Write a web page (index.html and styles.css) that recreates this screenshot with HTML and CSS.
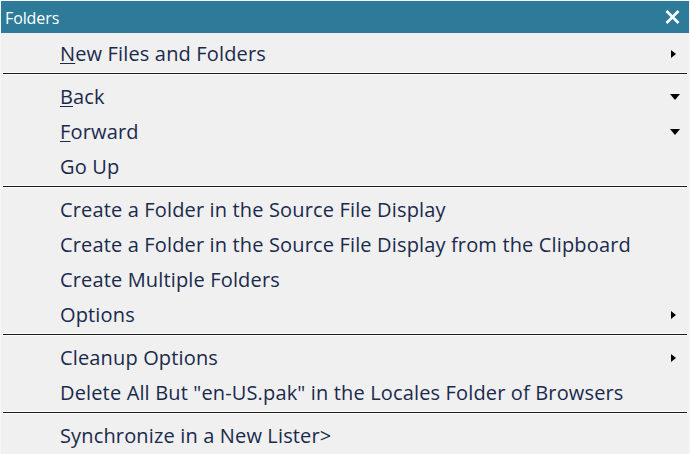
FILE: index.html
```html
<!DOCTYPE html>
<html>
<head>
<meta charset="utf-8">
<link rel="stylesheet" href="styles.css">
</head>
<body>
<div class="menu">
  <div class="title">
    <span class="title-text">Folders</span>
    <svg class="close" width="15" height="14" viewBox="0 0 15 14"><path d="M1.5 1 L13.5 13 M13.5 1 L1.5 13" stroke="#fff" stroke-width="2.6" fill="none"/></svg>
  </div>
  <div class="items">
    <div class="item"><span class="label"><u>N</u>ew Files and Folders</span><span class="arrow-right"></span></div>
    <div class="sep"></div>
    <div class="item"><span class="label"><u>B</u>ack</span><span class="arrow-down"></span></div>
    <div class="item"><span class="label"><u>F</u>orward</span><span class="arrow-down"></span></div>
    <div class="item"><span class="label">Go Up</span></div>
    <div class="sep"></div>
    <div class="item"><span class="label">Create a Folder in the Source File Display</span></div>
    <div class="item"><span class="label">Create a Folder in the Source File Display from the Clipboard</span></div>
    <div class="item"><span class="label">Create Multiple Folders</span></div>
    <div class="item"><span class="label">Options</span><span class="arrow-right"></span></div>
    <div class="sep"></div>
    <div class="item"><span class="label">Cleanup Options</span><span class="arrow-right"></span></div>
    <div class="item"><span class="label">Delete All But "en-US.pak" in the Locales Folder of Browsers</span></div>
    <div class="sep"></div>
    <div class="item"><span class="label">Synchronize in a New Lister&gt;</span></div>
  </div>
</div>
</body>
</html>
```
FILE: styles.css
```css
html, body {
  margin: 0;
  padding: 0;
  background: #f0f0f0;
}
.menu {
  width: 690px;
  height: 454px;
  box-sizing: border-box;
  border: 1px solid #f7f7f7;
  border-bottom: none;
  background: #f0f0f0;
  overflow: hidden;
  font-family: "Open Sans", "Noto Sans", sans-serif;
}
.title {
  height: 32px;
  background: #2d7b99;
  display: flex;
  align-items: center;
  justify-content: space-between;
  padding: 0 9px 0 4px;
}
.title-text {
  color: #ffffff;
  font-size: 16px;
  letter-spacing: -0.1px;
  margin-top: 1px;
}
.close {
  display: block;
}
.items {
  margin-top: 4px;
  display: flex;
  flex-direction: column;
}
.item {
  height: 35px;
  display: flex;
  align-items: center;
  justify-content: space-between;
  padding: 0 12px 0 59px;
  color: #1a2a4c;
  font-size: 20px;
  letter-spacing: 0.15px;
  line-height: 1;
  padding-bottom: 1px;
  box-sizing: border-box;
}
.item u {
  text-decoration-thickness: 1px;
  text-underline-offset: 2px;
}
.sep {
  height: 8px;
  margin: 0 2px;
  box-sizing: border-box;
  border-top: 1px solid #fdfdfd;
  display: flex;
  flex-direction: column;
}
.sep::before {
  content: "";
  display: block;
  height: 1px;
  background: #1a1a1a;
}
.sep::after {
  content: "";
  display: block;
  height: 1px;
  background: #fdfdfd;
}
.arrow-right {
  width: 0;
  height: 0;
  border-top: 4.5px solid transparent;
  border-bottom: 4.5px solid transparent;
  border-left: 5px solid #000;
  margin-right: 1px;
}
.arrow-down {
  width: 0;
  height: 0;
  border-left: 5.5px solid transparent;
  border-right: 5.5px solid transparent;
  border-top: 6px solid #000;
  margin-right: -3px;
}
```
